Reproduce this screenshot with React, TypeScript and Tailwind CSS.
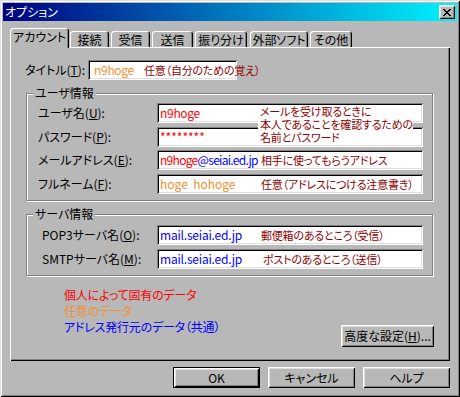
import React from "react";

const raised =
  "shadow-[inset_1px_1px_#ffffff,inset_-1px_-1px_#000000,inset_2px_2px_#dfdfdf,inset_-2px_-2px_#808080]";
const sunken =
  "shadow-[inset_1px_1px_#808080,inset_-1px_-1px_#ffffff,inset_2px_2px_#000000,inset_-2px_-2px_#dfdfdf]";
const etched = "border border-[#808080] shadow-[inset_1px_1px_#ffffff,1px_1px_#ffffff]";
const note = "text-[#900000] text-[11px] tracking-[-0.2px]";

const Key = ({ k }: { k: string }) => (
  <>
    (<span className="underline underline-offset-[1px]">{k}</span>):
  </>
);

const Field = ({ className, children }: { className: string; children: React.ReactNode }) => (
  <div className={`h-[20px] bg-white flex items-center whitespace-nowrap ${sunken} ${className}`}>
    {children}
  </div>
);

const tabs = [
  { label: "接続", cls: "ml-[1px] w-[39px]" },
  { label: "受信", cls: "ml-[2px] w-[39px]" },
  { label: "送信", cls: "ml-[2px] w-[41px]" },
  { label: "振り分け", cls: "ml-[2px] w-[52px]" },
  { label: "外部ソフト", cls: "ml-[3px] w-[58px]" },
  { label: "その他", cls: "ml-[2px] w-[42px]" },
];

const CloseGlyph = () => (
  <svg width="8" height="7" viewBox="0 0 8 7" shapeRendering="crispEdges">
    <path
      d="M0 0h2v1H0zM6 0h2v1H6zM1 1h2v1H1zM5 1h2v1H5zM2 2h4v1H2zM3 3h2v1H3zM2 4h4v1H2zM1 5h2v1H1zM5 5h2v1H5zM0 6h2v1H0zM6 6h2v1H6z"
      fill="#000"
    />
  </svg>
);

export default function App() {
  return (
    <div
      className={`w-[460px] h-[397px] bg-[#b8b8b8] p-[3px] flex flex-col font-['Noto_Sans_CJK_JP',sans-serif] text-[12px] leading-[14px] text-black [font-feature-settings:'palt'] shadow-[inset_1px_1px_#dfdfdf,inset_-1px_-1px_#000000,inset_2px_2px_#ffffff,inset_-2px_-2px_#808080]`}
    >
      {/* title bar */}
      <div className="h-[18px] flex items-center justify-between bg-[linear-gradient(90deg,#000080,#00f4ff)]">
        <span className="pl-[2px] text-white">オプション</span>
        <div className={`w-[16px] h-[14px] mr-[2px] bg-[#b8b8b8] flex items-center justify-center ${raised}`}>
          <CloseGlyph />
        </div>
      </div>

      <div className="flex flex-col px-[7px] pt-[7px]">
        {/* tabs */}
        <div className="flex items-end h-[19px]">
          <div className="relative z-10 w-[59px] h-[20px] -mb-[1px] pb-[2px] bg-[#b8b8b8] rounded-t-[3px] flex items-center justify-center shadow-[inset_1px_1px_#ffffff,inset_-1px_0_#000000,inset_-2px_0_#808080]">
            アカウント
          </div>
          {tabs.map((t) => (
            <div
              key={t.label}
              className={`${t.cls} h-[16px] pt-[1px] rounded-t-[3px] flex items-center justify-center shadow-[inset_1px_1px_#ffffff,inset_-1px_0_#000000,inset_-2px_0_#808080]`}
            >
              {t.label}
            </div>
          ))}
        </div>

        {/* tab sheet */}
        <div className="h-[314px] flex flex-col px-[16px] pt-[13px] shadow-[inset_1px_1px_#ffffff,inset_-1px_-1px_#000000,inset_-2px_-2px_#808080]">
          <div className="flex items-center">
            <div className="w-[63px] -ml-[1px]">
              タイトル<Key k="T" />
            </div>
            <Field className="w-[149px] pl-[6px]">
              <span className="w-[50px] shrink-0 text-[#f39030] tracking-[-0.3px]">n9hoge</span>
              <span className={note}>任意（自分のための覚え）</span>
            </Field>
          </div>

          <div className={`relative mt-[13px] w-[407px] h-[108px] pl-[11px] pt-[9px] flex flex-col ${etched}`}>
            <span className="absolute -top-[8px] left-[6px] px-[2px] bg-[#b8b8b8]">ユーザ情報</span>
            <div className="flex items-center">
              <div className="w-[119px]">
                ユーザ名<Key k="U" />
              </div>
              <Field className="w-[266px] pl-[3px]">
                <span className="text-[#ff0000] tracking-[-0.3px]">n9hoge</span>
              </Field>
            </div>
            <div className="flex items-center mt-[4px]">
              <div className="w-[119px]">
                パスワード<Key k="P" />
              </div>
              <Field className="w-[266px] pl-[3px]">
                <span className="text-[#ff0000]">********</span>
              </Field>
            </div>
            <div className="flex items-center mt-[3px]">
              <div className="w-[119px]">
                メールアドレス<Key k="E" />
              </div>
              <Field className="w-[266px] pl-[3px]">
                <span className="w-[101px] shrink-0 tracking-[-0.7px]">
                  <span className="text-[#ff0000]">n9hoge</span>
                  <span className="text-[#0000ff]">@seiai.ed.jp</span>
                </span>
                <span className={note}>相手に使ってもらうアドレス</span>
              </Field>
            </div>
            <div className="flex items-center mt-[4px]">
              <div className="w-[119px]">
                フルネーム<Key k="F" />
              </div>
              <Field className="w-[266px] pl-[3px]">
                <span className="w-[101px] shrink-0 text-[#f39030]">hoge&nbsp;&nbsp;hohoge</span>
                <span className={note}>任意（アドレスにつける注意書き）</span>
              </Field>
            </div>
            <div
              className={`absolute left-[231px] top-[11px] w-[155px] h-[40px] bg-white pl-[2px] flex flex-col leading-[13px] whitespace-nowrap ${note}`}
            >
              <span>メールを受け取るときに</span>
              <span>本人であることを確認するための</span>
              <span>名前とパスワード</span>
            </div>
          </div>

          <div className={`relative mt-[13px] w-[407px] h-[62px] pl-[11px] pt-[10px] flex flex-col ${etched}`}>
            <span className="absolute -top-[8px] left-[6px] px-[2px] bg-[#b8b8b8]">サーバ情報</span>
            <div className="flex items-center">
              <div className="w-[119px] pl-[4px]">
                POP3サーバ名<Key k="O" />
              </div>
              <Field className="w-[266px] pl-[3px]">
                <span className="w-[101px] shrink-0 text-[#0000ff] tracking-[-0.2px]">mail.seiai.ed.jp</span>
                <span className={note}>郵便箱のあるところ（受信）</span>
              </Field>
            </div>
            <div className="flex items-center mt-[4px]">
              <div className="w-[119px] pl-[4px]">
                SMTPサーバ名<Key k="M" />
              </div>
              <Field className="w-[266px] pl-[3px]">
                <span className="w-[103px] shrink-0 text-[#0000ff] tracking-[-0.2px]">mail.seiai.ed.jp</span>
                <span className={note}>ポストのあるところ（送信）</span>
              </Field>
            </div>
          </div>

          <div className="flex mt-[11px]">
            <div className="ml-[38px] flex flex-col leading-[16px] tracking-[-0.2px]">
              <span className="text-[#ff0000]">個人によって固有のデータ</span>
              <span className="text-[#f39030]">任意のデータ</span>
              <span className="text-[#0000ff]">アドレス発行元のデータ（共通）</span>
            </div>
            <div
              className={`ml-auto mt-[38px] w-[93px] h-[22px] flex items-center justify-center ${raised}`}
            >
              高度な設定(<span className="underline underline-offset-[1px]">H</span>)...
            </div>
          </div>
        </div>

        {/* dialog buttons */}
        <div className="flex justify-end gap-[8px] mt-[6px]">
          <div className="w-[87px] h-[21px] border border-black">
            <div className={`w-full h-full flex items-center justify-center ${raised}`}>OK</div>
          </div>
          <div className={`w-[87px] h-[21px] flex items-center justify-center ${raised}`}>キャンセル</div>
          <div className={`w-[87px] h-[21px] flex items-center justify-center ${raised}`}>ヘルプ</div>
        </div>
      </div>
    </div>
  );
}
